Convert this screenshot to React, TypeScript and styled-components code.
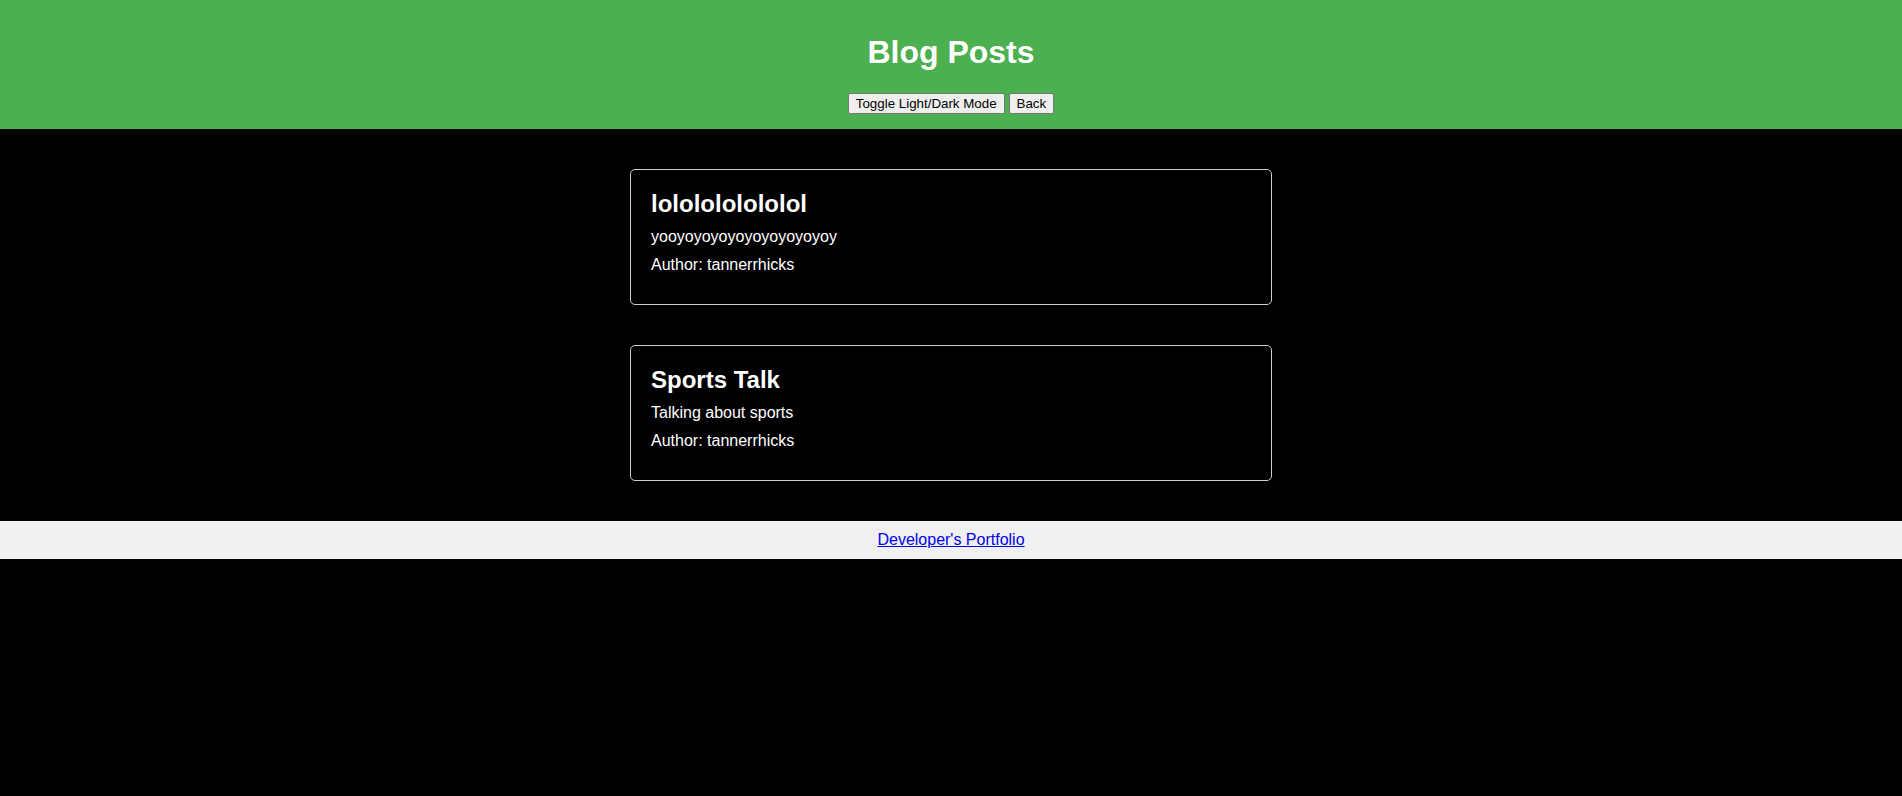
import React from "react";
import styled, { createGlobalStyle } from "styled-components";

const GlobalStyle = createGlobalStyle`
  html, body {
    margin: 0;
    padding: 0;
    background: #000;
    font-family: "Liberation Sans", Arial, sans-serif;
  }
`;

const Header = styled.header`
  background: #4caf50;
  color: #fff;
  text-align: center;
  padding: 34px 0 15px;
`;

const Title = styled.h1`
  margin: 0 0 22px;
  font-size: 32px;
  font-weight: bold;
`;

const Controls = styled.div`
  display: flex;
  justify-content: center;
  gap: 4px;
`;

const Button = styled.button`
  font-family: "Liberation Sans", Arial, sans-serif;
  font-size: 13.33px;
  color: #000;
  background: #efefef;
  border: 1px solid #767676;
  border-radius: 2px;
  padding: 1px 7px;
  height: 21px;
  cursor: pointer;
`;

const Main = styled.main`
  display: flex;
  flex-direction: column;
  align-items: center;
  gap: 40px;
  padding: 40px 0;
`;

const Card = styled.article`
  box-sizing: border-box;
  width: 642px;
  padding: 20px;
  border: 1px solid #ccc;
  border-radius: 5px;
  color: #fff;
`;

const CardTitle = styled.h2`
  margin: 0 0 10px;
  font-size: 24px;
  font-weight: bold;
`;

const Text = styled.p`
  margin: 10px 0;
  font-size: 16px;
`;

const Footer = styled.footer`
  background: #f0f0f0;
  text-align: center;
  padding: 10px 0;
  font-size: 16px;
`;

const Link = styled.a`
  color: #0000ee;
  text-decoration: underline;
`;

const posts = [
  { title: "lololololololol", body: "yooyoyoyoyoyoyoyoyoyoy", author: "tannerrhicks" },
  { title: "Sports Talk", body: "Talking about sports", author: "tannerrhicks" },
];

export default function App() {
  return (
    <>
      <GlobalStyle />
      <Header>
        <Title>Blog Posts</Title>
        <Controls>
          <Button>Toggle Light/Dark Mode</Button>
          <Button>Back</Button>
        </Controls>
      </Header>
      <Main>
        {posts.map((p) => (
          <Card key={p.title}>
            <CardTitle>{p.title}</CardTitle>
            <Text>{p.body}</Text>
            <Text>Author: {p.author}</Text>
          </Card>
        ))}
      </Main>
      <Footer>
        <Link href="#">Developer's Portfolio</Link>
      </Footer>
    </>
  );
}
